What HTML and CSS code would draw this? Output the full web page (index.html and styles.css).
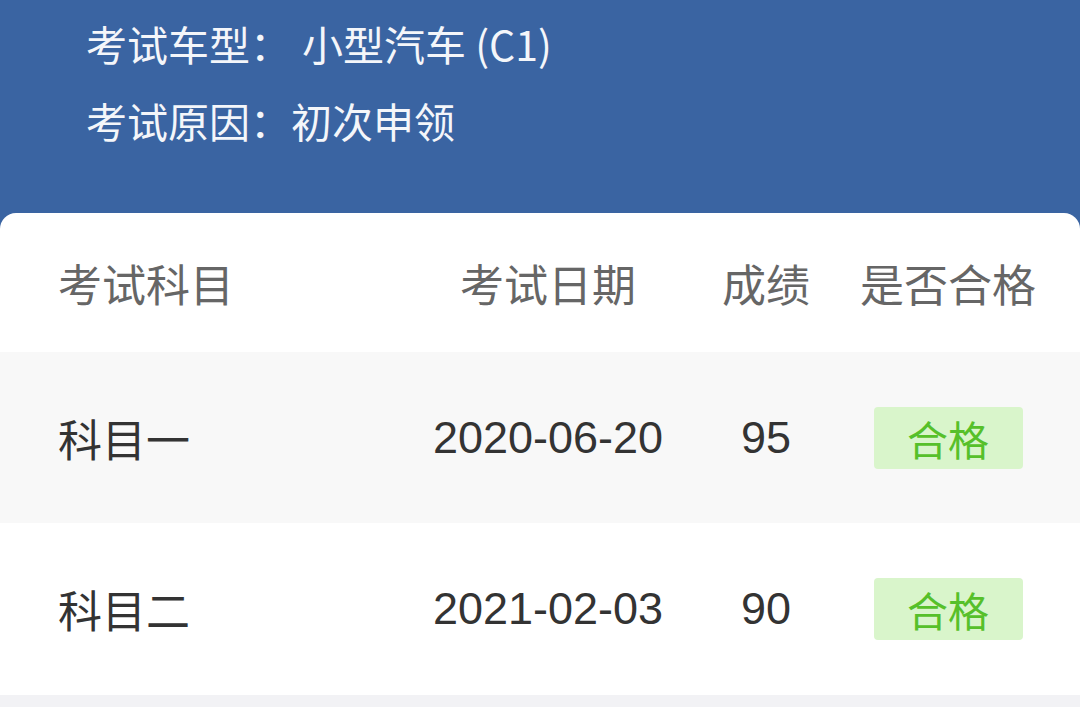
FILE: index.html
```html
<!DOCTYPE html>
<html lang="zh-CN">
<head>
<meta charset="utf-8">
<link rel="stylesheet" href="styles.css">
</head>
<body>
<div class="page">
  <section class="info">
    <div class="info-line"><span class="info-label">考试车型：</span><span class="info-value gap">小型汽车 (C1)</span></div>
    <div class="info-line"><span class="info-label">考试原因：</span><span class="info-value">初次申领</span></div>
  </section>
  <section class="card">
    <div class="row head">
      <div class="c1">考试科目</div>
      <div class="c2">考试日期</div>
      <div class="c3">成绩</div>
      <div class="c4">是否合格</div>
    </div>
    <div class="row odd">
      <div class="c1">科目一</div>
      <div class="c2 num">2020-06-20</div>
      <div class="c3 num">95</div>
      <div class="c4"><span class="badge">合格</span></div>
    </div>
    <div class="row">
      <div class="c1">科目二</div>
      <div class="c2 num">2021-02-03</div>
      <div class="c3 num">90</div>
      <div class="c4"><span class="badge">合格</span></div>
    </div>
  </section>
</div>
</body>
</html>
```
FILE: styles.css
```css
html, body {
  margin: 0;
  padding: 0;
}
body {
  background: linear-gradient(#3a64a2 0, #3a64a2 260px, #f2f2f5 260px);
  font-family: "Noto Sans CJK SC", "Noto Sans", sans-serif;
  width: 1080px;
  height: 707px;
  overflow: hidden;
}
.page {
  display: flex;
  flex-direction: column;
}
.info {
  background: #3a64a2;
  color: #f4f6fa;
  padding: 5px 0 0 86px;
  height: 208px;
}
.info-line {
  font-size: 41px;
  line-height: 77px;
  white-space: nowrap;
}
.info-value.gap {
  margin-left: 11px;
}
.card {
  background: #ffffff;
  border-radius: 16px 16px 0 0;
  overflow: hidden;
}
.row {
  display: grid;
  grid-template-columns: 372px 236px 200px 164px;
  padding: 0 50px 0 58px;
  align-items: center;
  height: 172px;
  font-size: 44px;
  color: #333333;
}
.row.head {
  height: 139px;
  color: #666666;
}
.row.odd {
  background: #f8f8f8;
  height: 171px;
}
.c1 {
  text-align: left;
  white-space: nowrap;
}
.c2, .c3, .c4 {
  text-align: center;
  white-space: nowrap;
}
.num {
  font-family: "Liberation Sans", "Noto Sans CJK SC", sans-serif;
  font-size: 45px;
}
.c4 {
  display: flex;
  justify-content: center;
}
.badge {
  display: flex;
  align-items: center;
  justify-content: center;
  width: 149px;
  height: 62px;
  background: #d9f5cb;
  color: #56c02a;
  border-radius: 4px;
  font-size: 41px;
}
```
